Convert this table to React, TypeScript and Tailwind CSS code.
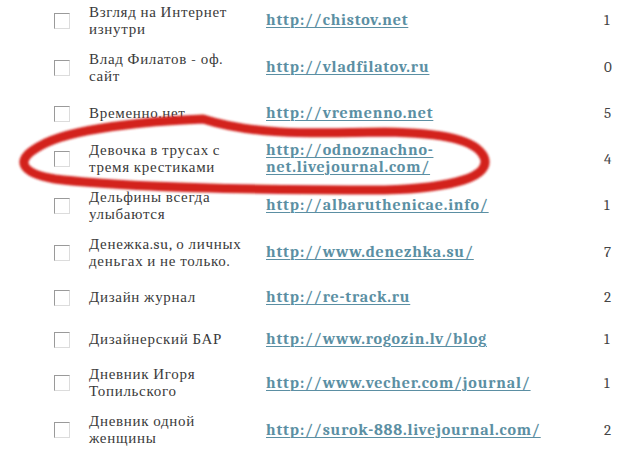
const rows = [
  { name: ["Взгляд на Интернет", "изнутри"], url: ["http://chistov.net"], count: "1", h: "h-[47px]" },
  { name: ["Влад Филатов - оф.", "сайт"], url: ["http://vladfilatov.ru"], count: "0", h: "h-[47px]" },
  { name: ["Временно.нет"], url: ["http://vremenno.net"], count: "5", h: "h-[45px]" },
  { name: ["Девочка в трусах с", "тремя крестиками"], url: ["http://odnoznachno-", "net.livejournal.com/"], count: "4", h: "h-[46px]" },
  { name: ["Дельфины всегда", "улыбаются"], url: ["http://albaruthenicae.info/"], count: "1", h: "h-[47px]" },
  { name: ["Денежка.su, о личных", "деньгах и не только."], url: ["http://www.denezhka.su/"], count: "7", h: "h-[47px]" },
  { name: ["Дизайн журнал"], url: ["http://re-track.ru"], count: "2", h: "h-[43px]" },
  { name: ["Дизайнерский БАР"], url: ["http://www.rogozin.lv/blog"], count: "1", h: "h-[41px]" },
  { name: ["Дневник Игоря", "Топильского"], url: ["http://www.vecher.com/journal/"], count: "1", h: "h-[46px]" },
  { name: ["Дневник одной", "женщины"], url: ["http://surok-888.livejournal.com/"], count: "2", h: "h-[48px]" },
];

function Row({ row }: { row: (typeof rows)[number] }) {
  return (
    <div className={`flex items-center ${row.h}`}>
      <div className="w-[54px] shrink-0" />
      <div className="w-[35px] shrink-0">
        <div className="w-4 h-4 bg-white border border-t-[#9a9a9a] border-l-[#9a9a9a] border-b-[#dcdcdc] border-r-[#dcdcdc]" />
      </div>
      <div className="w-[177px] shrink-0 text-[15px] leading-[17px] tracking-[0.7px] text-[#3a3a3a]">
        {row.name.map((line, i) => (
          <div key={i} className="whitespace-nowrap">{line}</div>
        ))}
      </div>
      <div className="flex-1 text-[16px] leading-[17px] font-bold tracking-[0.8px] text-[#5b8fa3]">
        {row.url.map((line, i) => (
          <div key={i} className="whitespace-nowrap">
            <a href="#" className="underline decoration-1 underline-offset-2">{line}</a>
          </div>
        ))}
      </div>
      <div className="w-[36px] shrink-0 text-[15px] text-[#444]">{row.count}</div>
    </div>
  );
}

export default function App() {
  return (
    <div className="relative w-[640px] h-[451px] overflow-hidden bg-white font-serif">
      <div className="flex flex-col -mt-[3px]">
        {rows.map((row, i) => (
          <Row key={i} row={row} />
        ))}
      </div>
      <svg className="absolute left-0 top-0 pointer-events-none" width="640" height="451" viewBox="0 0 640 451">
        <defs>
          <filter id="soft" x="-10%" y="-10%" width="120%" height="120%">
            <feGaussianBlur stdDeviation="0.9" />
          </filter>
        </defs>
        <path
          d="M203 119 C150 121 70 128 40 146 C14 160 20 173 55 179 C120 187 250 190 385 190 C455 188 492 176 484 157 C476 140 445 133 385 132 C300 134 250 134 203 119"
          fill="none"
          stroke="#d3201f"
          strokeWidth="9"
          strokeLinecap="round"
          strokeLinejoin="round"
          filter="url(#soft)"
        />
      </svg>
    </div>
  );
}
